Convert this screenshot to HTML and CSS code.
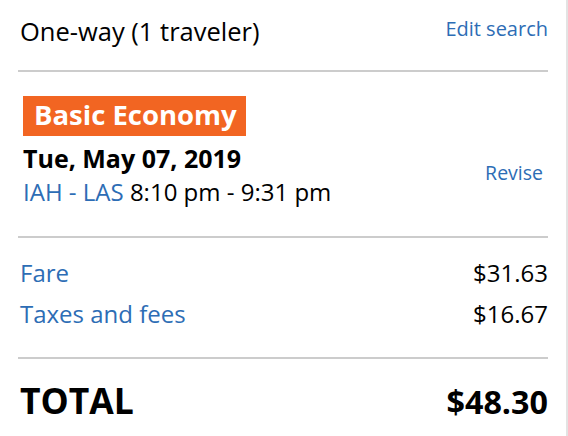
FILE: index.html
```html
<!DOCTYPE html>
<html>
<head>
<meta charset="utf-8">
<link rel="stylesheet" href="styles.css">
</head>
<body>
<div class="panel">
  <div class="header">
    <div class="trip">One-way (1 traveler)</div>
    <a class="link edit">Edit search</a>
  </div>
  <div class="flight">
    <div class="flight-info">
      <div class="badge">Basic Economy</div>
      <div class="date">Tue, May 07, 2019</div>
      <div class="route"><span class="blue">IAH - LAS</span> 8:10 pm - 9:31 pm</div>
    </div>
    <a class="link revise">Revise</a>
  </div>
  <div class="prices">
    <div class="row"><span class="blue">Fare</span><span>$31.63</span></div>
    <div class="row"><span class="blue">Taxes and fees</span><span>$16.67</span></div>
  </div>
  <div class="total">
    <span class="label">TOTAL</span><span class="amount">$48.30</span>
  </div>
</div>
</body>
</html>
```
FILE: styles.css
```css
html, body {
  margin: 0;
  padding: 0;
  background: #fff;
}
body {
  font-family: "Open Sans", "DejaVu Sans", sans-serif;
  color: #000;
}
.panel {
  width: 530px;
  height: 436px;
  padding: 0 18px 0 18px;
  border-right: 2px solid #e3e3e3;
  box-sizing: content-box;
}
.blue, .link {
  color: #2d6db5;
}
.header {
  display: flex;
  justify-content: space-between;
  align-items: flex-start;
  height: 70px;
  border-bottom: 2px solid #cccccc;
}
.trip {
  font-size: 25.5px;
  line-height: 32px;
  margin-top: 15px;
  padding-left: 2px;
}
.edit {
  font-size: 20px;
  line-height: 26px;
  margin-top: 16px;
}
.flight {
  display: flex;
  justify-content: space-between;
  align-items: flex-start;
  height: 140px;
  border-bottom: 2px solid #cccccc;
  padding: 24px 5px 0 5px;
}
.flight-info {
  display: flex;
  flex-direction: column;
  align-items: flex-start;
}
.badge {
  background: #f26522;
  color: #fff;
  font-weight: 700;
  font-size: 27.5px;
  line-height: 38px;
  height: 40px;
  padding: 0 9px 0 11px;
}
.date {
  font-weight: 700;
  font-size: 25px;
  line-height: 32px;
  margin-top: 6px;
}
.route {
  font-size: 24px;
  line-height: 32px;
  margin-top: 2px;
}
.revise {
  font-size: 19.5px;
  line-height: 26px;
  margin-top: 64px;
}
.prices {
  height: 121px;
  border-bottom: 2px solid #cccccc;
  padding-top: 14px;
  padding-left: 2px;
  box-sizing: border-box;
}
.row {
  display: flex;
  justify-content: space-between;
  font-size: 24px;
  line-height: 41px;
}
.total {
  display: flex;
  justify-content: space-between;
  align-items: baseline;
  font-weight: 700;
  line-height: 40px;
  padding-top: 21px;
  padding-left: 2px;
}
.total .label {
  font-size: 35.5px;
}
.total .amount {
  font-size: 32.3px;
}
```
